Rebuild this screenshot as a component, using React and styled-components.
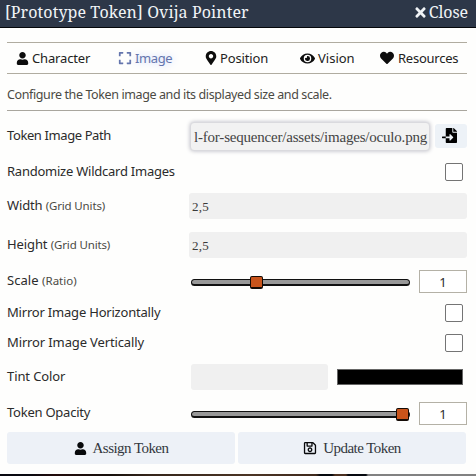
import React from "react";
import styled, { createGlobalStyle } from "styled-components";
import {
  FaUser,
  FaExpand,
  FaMapMarkerAlt,
  FaEye,
  FaHeart,
  FaTimes,
  FaFileImport,
  FaRegSave,
} from "react-icons/fa";

const GlobalStyle = createGlobalStyle`
  * { box-sizing: border-box; }
  body { margin: 0; background: #fefefd; overflow: hidden; }
  svg { display: block; flex: none; }
`;

const sans = `"Noto Sans", "Open Sans", sans-serif`;
const serif = `"Liberation Serif", serif`;
const slab = `"Noto Serif", "DejaVu Serif", serif`;

const Window = styled.div`
  width: 476px;
  height: 476px;
  display: flex;
  flex-direction: column;
  background: #fefefd;
  color: #2b2b2b;
  font: 13px/18px ${sans};
  white-space: nowrap;
  overflow: hidden;
`;

const Header = styled.header`
  height: 28px;
  flex: none;
  display: flex;
  justify-content: space-between;
  padding: 0 8px 0 5px;
  background: #2d3748;
  border-bottom: 1px solid #05070a;
  color: #f0f3f6;
  font: 16px/24px ${slab};
`;

const Title = styled.span`
  letter-spacing: 0.1px;
`;

const Close = styled.span`
  display: flex;
  align-items: center;
  height: 24px;
  gap: 1px;
  letter-spacing: -0.1px;
`;

const Body = styled.main`
  flex: 1;
  display: flex;
  flex-direction: column;
  padding: 14px 9px 0 7px;
`;

const Tabs = styled.nav`
  height: 32px;
  flex: none;
  display: grid;
  grid-template-columns: 102px 86px 96px 80px 1fr;
  align-items: center;
  border-top: 1px solid #b0aca0;
  border-bottom: 1px solid #b0aca0;
  padding-left: 9px;
`;

const Tab = styled.span`
  display: flex;
  align-items: center;
  gap: ${(p) => p.$gap ?? 4}px;
  letter-spacing: ${(p) => p.$spacing ?? 0}px;
  color: ${(p) => (p.$active ? "#6475ad" : "#222")};
  text-shadow: ${(p) => (p.$active ? "0 0 8px #b9c8fa" : "none")};

  svg {
    color: ${(p) => (p.$active ? "#6475ad" : "#0d0d0d")};
  }
`;

const Notes = styled.p`
  height: 37px;
  flex: none;
  margin: 0;
  padding-top: 12px;
  border-bottom: 1px solid #a9a69e;
  color: #4b4a44;
  font-size: 12.5px;
  letter-spacing: -0.39px;
`;

const Row = styled.div`
  height: 30px;
  flex: none;
  display: grid;
  grid-template-columns: 182px 1fr;
  align-items: center;
  margin-top: ${(p) => p.$gap}px;
`;

const Label = styled.label`
  padding-bottom: ${(p) => p.$lift ?? 2}px;
  letter-spacing: ${(p) => p.$spacing ?? 0}px;

  small {
    font-size: 11.5px;
    color: #4b4a44;
    letter-spacing: ${(p) => p.$unitSpacing ?? -0.15}px;
  }
`;

const Field = styled.div`
  display: flex;
  align-items: center;
  justify-content: ${(p) => (p.$end ? "flex-end" : "flex-start")};
  padding-right: ${(p) => (p.$end ? 4 : 0)}px;
`;

const TextBox = styled.div`
  width: ${(p) => p.$width}px;
  height: 26px;
  margin-left: ${(p) => p.$inset ?? 0}px;
  padding-left: 3px;
  border-radius: 3px;
  background: #f0f0f0;
  color: #3a3a3a;
  font: 13px/28px ${serif};
  letter-spacing: 0.2px;
`;

const PathBox = styled.div`
  width: 240px;
  height: 29px;
  flex: none;
  margin-left: 1px;
  padding-left: 3px;
  border: 1px solid #dadade;
  border-radius: 4px;
  box-shadow: 0 0 4px #b9b9c2;
  background: #f2f2f2;
  color: #444;
  font: 15px/28px ${serif};
  letter-spacing: -0.2px;
`;

const BrowseButton = styled.button`
  width: 32px;
  height: 24px;
  margin: 0 0 1px 5px;
  padding: 0 0 1px 7px;
  border: 0;
  border-radius: 3px;
  background: #edf2f7;
  color: #000;
`;

const Checkbox = styled.span`
  width: 18px;
  height: 18px;
  border: 1px solid #747474;
  border-radius: 2px;
  background: #fff;
`;

const Track = styled.div`
  position: relative;
  width: 219px;
  height: 7px;
  margin-left: 2px;
  border: solid #111;
  border-width: 1px 1px 2px;
  border-radius: 4px;
  background: #989898;
`;

const Thumb = styled.span`
  position: absolute;
  top: -4px;
  width: 13px;
  height: 13px;
  border: 1px solid #140b06;
  border-bottom-width: 2px;
  border-radius: 2px;
  background: #c9541b;
`;

const RangeValue = styled.span`
  width: 48px;
  height: 23px;
  margin: 0 0 1px 9px;
  border: 1px solid #b4b1a6;
  background: #fff;
  text-align: center;
  line-height: 22px;
`;

const Swatch = styled.span`
  width: 126px;
  height: 16px;
  margin-left: 9px;
  border: 1px solid #666;
  background: #000;
`;

const Footer = styled.footer`
  display: grid;
  grid-template-columns: 228px 228px;
  gap: 3px;
  margin-top: 3px;
  height: 32px;
  flex: none;
`;

const ActionButton = styled.button`
  display: flex;
  align-items: center;
  justify-content: center;
  gap: 6px;
  padding: 0;
  border: 0;
  border-radius: 3px;
  background: #edf1f7;
  color: #33373d;
  font: 15px/18px ${serif};
  letter-spacing: -0.55px;

  svg {
    color: #08090b;
  }
`;

const Backdrop = styled.div`
  height: 2px;
  flex: none;
  background: linear-gradient(
    90deg,
    #080910 0 28px, #220b0b 55px, #17100c 110px, #35251a 150px, #4b3424 250px,
    #3f291c 316px, #05080d 320px 332px, #4b3020 335px 346px, #06090f 348px 366px,
    #818181 368px
  );
`;

function Slider({ value }) {
  return (
    <Field>
      <Track>
        <Thumb style={{ left: value * 205 - 1 }} />
      </Track>
      <RangeValue>1</RangeValue>
    </Field>
  );
}

export default function App() {
  return (
    <Window>
      <GlobalStyle />
      <Header>
        <Title>[Prototype Token] Ovija Pointer</Title>
        <Close><FaTimes size={15} />Close</Close>
      </Header>
      <Body>
        <Tabs>
          <Tab $gap={3} $spacing={-0.15}><FaUser size={13} />Character</Tab>
          <Tab $gap={3} $spacing={-0.4} $active><FaExpand size={14} />Image</Tab>
          <Tab $gap={2} $spacing={-0.15}><FaMapMarkerAlt size={14} />Position</Tab>
          <Tab $gap={3} $spacing={0}><FaEye size={15} />Vision</Tab>
          <Tab $gap={4} $spacing={-0.25}><FaHeart size={14} />Resources</Tab>
        </Tabs>
        <Notes>Configure the Token image and its displayed size and scale.</Notes>
        <Row $gap={10}>
          <Label $spacing={-0.4}>Token Image Path</Label>
          <Field>
            <PathBox>l-for-sequencer/assets/images/oculo.png</PathBox>
            <BrowseButton aria-label="Browse Files"><FaFileImport size={15} /></BrowseButton>
          </Field>
        </Row>
        <Row $gap={6}>
          <Label $spacing={-0.24}>Randomize Wildcard Images</Label>
          <Field $end><Checkbox /></Field>
        </Row>
        <Row $gap={4}>
          <Label $spacing={-0.15}>Width <small>(Grid Units)</small></Label>
          <Field><TextBox $width={278}>2,5</TextBox></Field>
        </Row>
        <Row $gap={9}>
          <Label $spacing={-0.1}>Height <small>(Grid Units)</small></Label>
          <Field><TextBox $width={278}>2,5</TextBox></Field>
        </Row>
        <Row $gap={7}>
          <Label $lift={4} $spacing={0.05} $unitSpacing={0}>Scale <small>(Ratio)</small></Label>
          <Slider value={0.288} />
        </Row>
        <Row $gap={1}>
          <Label $spacing={-0.2}>Mirror Image Horizontally</Label>
          <Field $end><Checkbox /></Field>
        </Row>
        <Row $gap={0}>
          <Label $spacing={-0.13}>Mirror Image Vertically</Label>
          <Field $end><Checkbox /></Field>
        </Row>
        <Row $gap={4}>
          <Label $spacing={-0.1}>Tint Color</Label>
          <Field>
            <TextBox $width={137} $inset={2} />
            <Swatch />
          </Field>
        </Row>
        <Row $gap={7}>
          <Label $lift={4} $spacing={-0.24}>Token Opacity</Label>
          <Slider value={1} />
        </Row>
        <Footer>
          <ActionButton><FaUser size={13} />Assign Token</ActionButton>
          <ActionButton><FaRegSave size={14} />Update Token</ActionButton>
        </Footer>
      </Body>
      <Backdrop />
    </Window>
  );
}
